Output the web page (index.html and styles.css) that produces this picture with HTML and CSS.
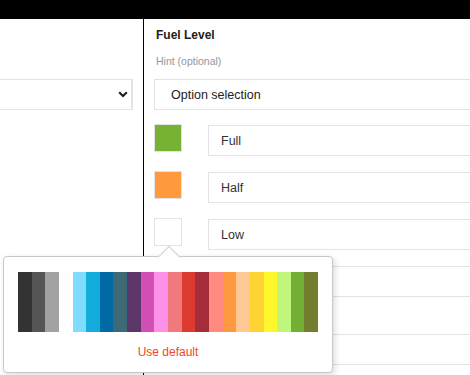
FILE: index.html
```html
<!DOCTYPE html>
<html>
<head>
<meta charset="utf-8">
<link rel="stylesheet" href="styles.css">
</head>
<body>
<div class="topbar"></div>
<div class="main">
  <div class="left">
    <div class="select">
      <svg class="chev" width="10" height="7" viewBox="0 0 10 7"><polyline points="1.2,1.3 5,5 8.8,1.3" fill="none" stroke="#1e1e28" stroke-width="2.2"/></svg>
    </div>
  </div>
  <div class="right">
    <div class="label">Fuel Level</div>
    <div class="hint">Hint (optional)</div>
    <div class="optsel">Option selection</div>
    <div class="rows">
      <div class="row"><div class="sw green"></div><div class="inp">Full</div></div>
      <div class="row"><div class="sw orange"></div><div class="inp">Half</div></div>
      <div class="row"><div class="sw"></div><div class="inp">Low</div></div>
      <div class="row"><div class="sw"></div><div class="inp"></div></div>
      <div class="row extra"><div class="sw"></div><div class="inp"></div></div>
    </div>
  </div>
</div>
<div class="popover">
  <div class="arrow"></div>
  <div class="strip">
    <span style="background:#333333"></span>
    <span style="background:#555555"></span>
    <span style="background:#a2a2a2"></span>
    <span style="background:#ffffff"></span>
    <span style="background:#80dcfc"></span>
    <span style="background:#13acdc"></span>
    <span style="background:#006aa4"></span>
    <span style="background:#3e6976"></span>
    <span style="background:#5c3669"></span>
    <span style="background:#d250b5"></span>
    <span style="background:#fd91ea"></span>
    <span style="background:#ef797d"></span>
    <span style="background:#dd3b30"></span>
    <span style="background:#a52d3b"></span>
    <span style="background:#fe8a80"></span>
    <span style="background:#fd9a3f"></span>
    <span style="background:#fec893"></span>
    <span style="background:#fed432"></span>
    <span style="background:#fdf72b"></span>
    <span style="background:#c0f67c"></span>
    <span style="background:#73ae37"></span>
    <span style="background:#747c2f"></span>
  </div>
  <div class="usedefault">Use default</div>
</div>
</body>
</html>
```
FILE: styles.css
```css
html, body {
  margin: 0;
  padding: 0;
  width: 470px;
  height: 375px;
  overflow: hidden;
  background: #fff;
  font-family: "Liberation Sans", Arial, sans-serif;
  color: #222;
}
.topbar {
  height: 19px;
  background: #000;
}
.main {
  display: flex;
  height: 356px;
  overflow: hidden;
}
.left {
  width: 133px;
  padding-right: 10px;
  border-right: 1px solid #000;
  flex-shrink: 0;
  padding-top: 60px;
}
.select {
  margin-left: -20px;
  height: 29px;
  border: 1px solid #e3e3e3;
  border-right-width: 2px;
  display: flex;
  align-items: center;
  justify-content: flex-end;
  padding-right: 3px;
}
.chev {
  display: block;
}
.right {
  padding-left: 10px;
  width: 400px;
  flex-shrink: 0;
}
.label {
  margin-top: 8px;
  padding-left: 2px;
  font-size: 12px;
  font-weight: bold;
  line-height: 16px;
  color: #222;
}
.hint {
  margin-top: 11px;
  padding-left: 2px;
  font-size: 10.5px;
  line-height: 14px;
  color: #969696;
}
.optsel {
  margin-top: 11px;
  height: 29px;
  border: 1px solid #e3e3e3;
  display: flex;
  align-items: center;
  padding-left: 16px;
  font-size: 12.5px;
  color: #222;
}
.rows {
  margin-top: 14px;
  display: flex;
  flex-direction: column;
  gap: 15px;
}
.row {
  display: flex;
  align-items: flex-start;
  gap: 26px;
}
.row.extra {
  margin-top: 21px;
}
.sw {
  width: 26px;
  height: 26px;
  border: 1px solid #e3e3e3;
  flex-shrink: 0;
}
.sw.green { background: #77b235; }
.sw.orange { background: #fe993e; }
.inp {
  margin-top: 1px;
  flex: 1;
  height: 29px;
  border: 1px solid #e3e3e3;
  display: flex;
  align-items: center;
  padding-left: 12px;
  font-size: 12.5px;
  color: #333;
}
.popover {
  position: absolute;
  left: 3px;
  top: 256px;
  width: 330px;
  height: 117px;
  border: 1px solid #c8c8c8;
  border-radius: 4px;
  background: #fff;
  box-shadow: 2px 2px 6px rgba(0, 0, 0, 0.14);
  padding: 15px 14px 0 14px;
  box-sizing: border-box;
}
.arrow {
  position: absolute;
  left: 157px;
  top: -8.5px;
  width: 15px;
  height: 15px;
  background: #fff;
  border-top: 1px solid #d0d0d0;
  border-left: 1px solid #d0d0d0;
  transform: rotate(45deg);
}
.strip {
  display: flex;
  height: 60px;
  width: 300px;
}
.strip span {
  flex: 1;
}
.usedefault {
  margin-top: 12px;
  text-align: center;
  font-size: 12px;
  line-height: 16px;
  color: #f0462a;
}
```
